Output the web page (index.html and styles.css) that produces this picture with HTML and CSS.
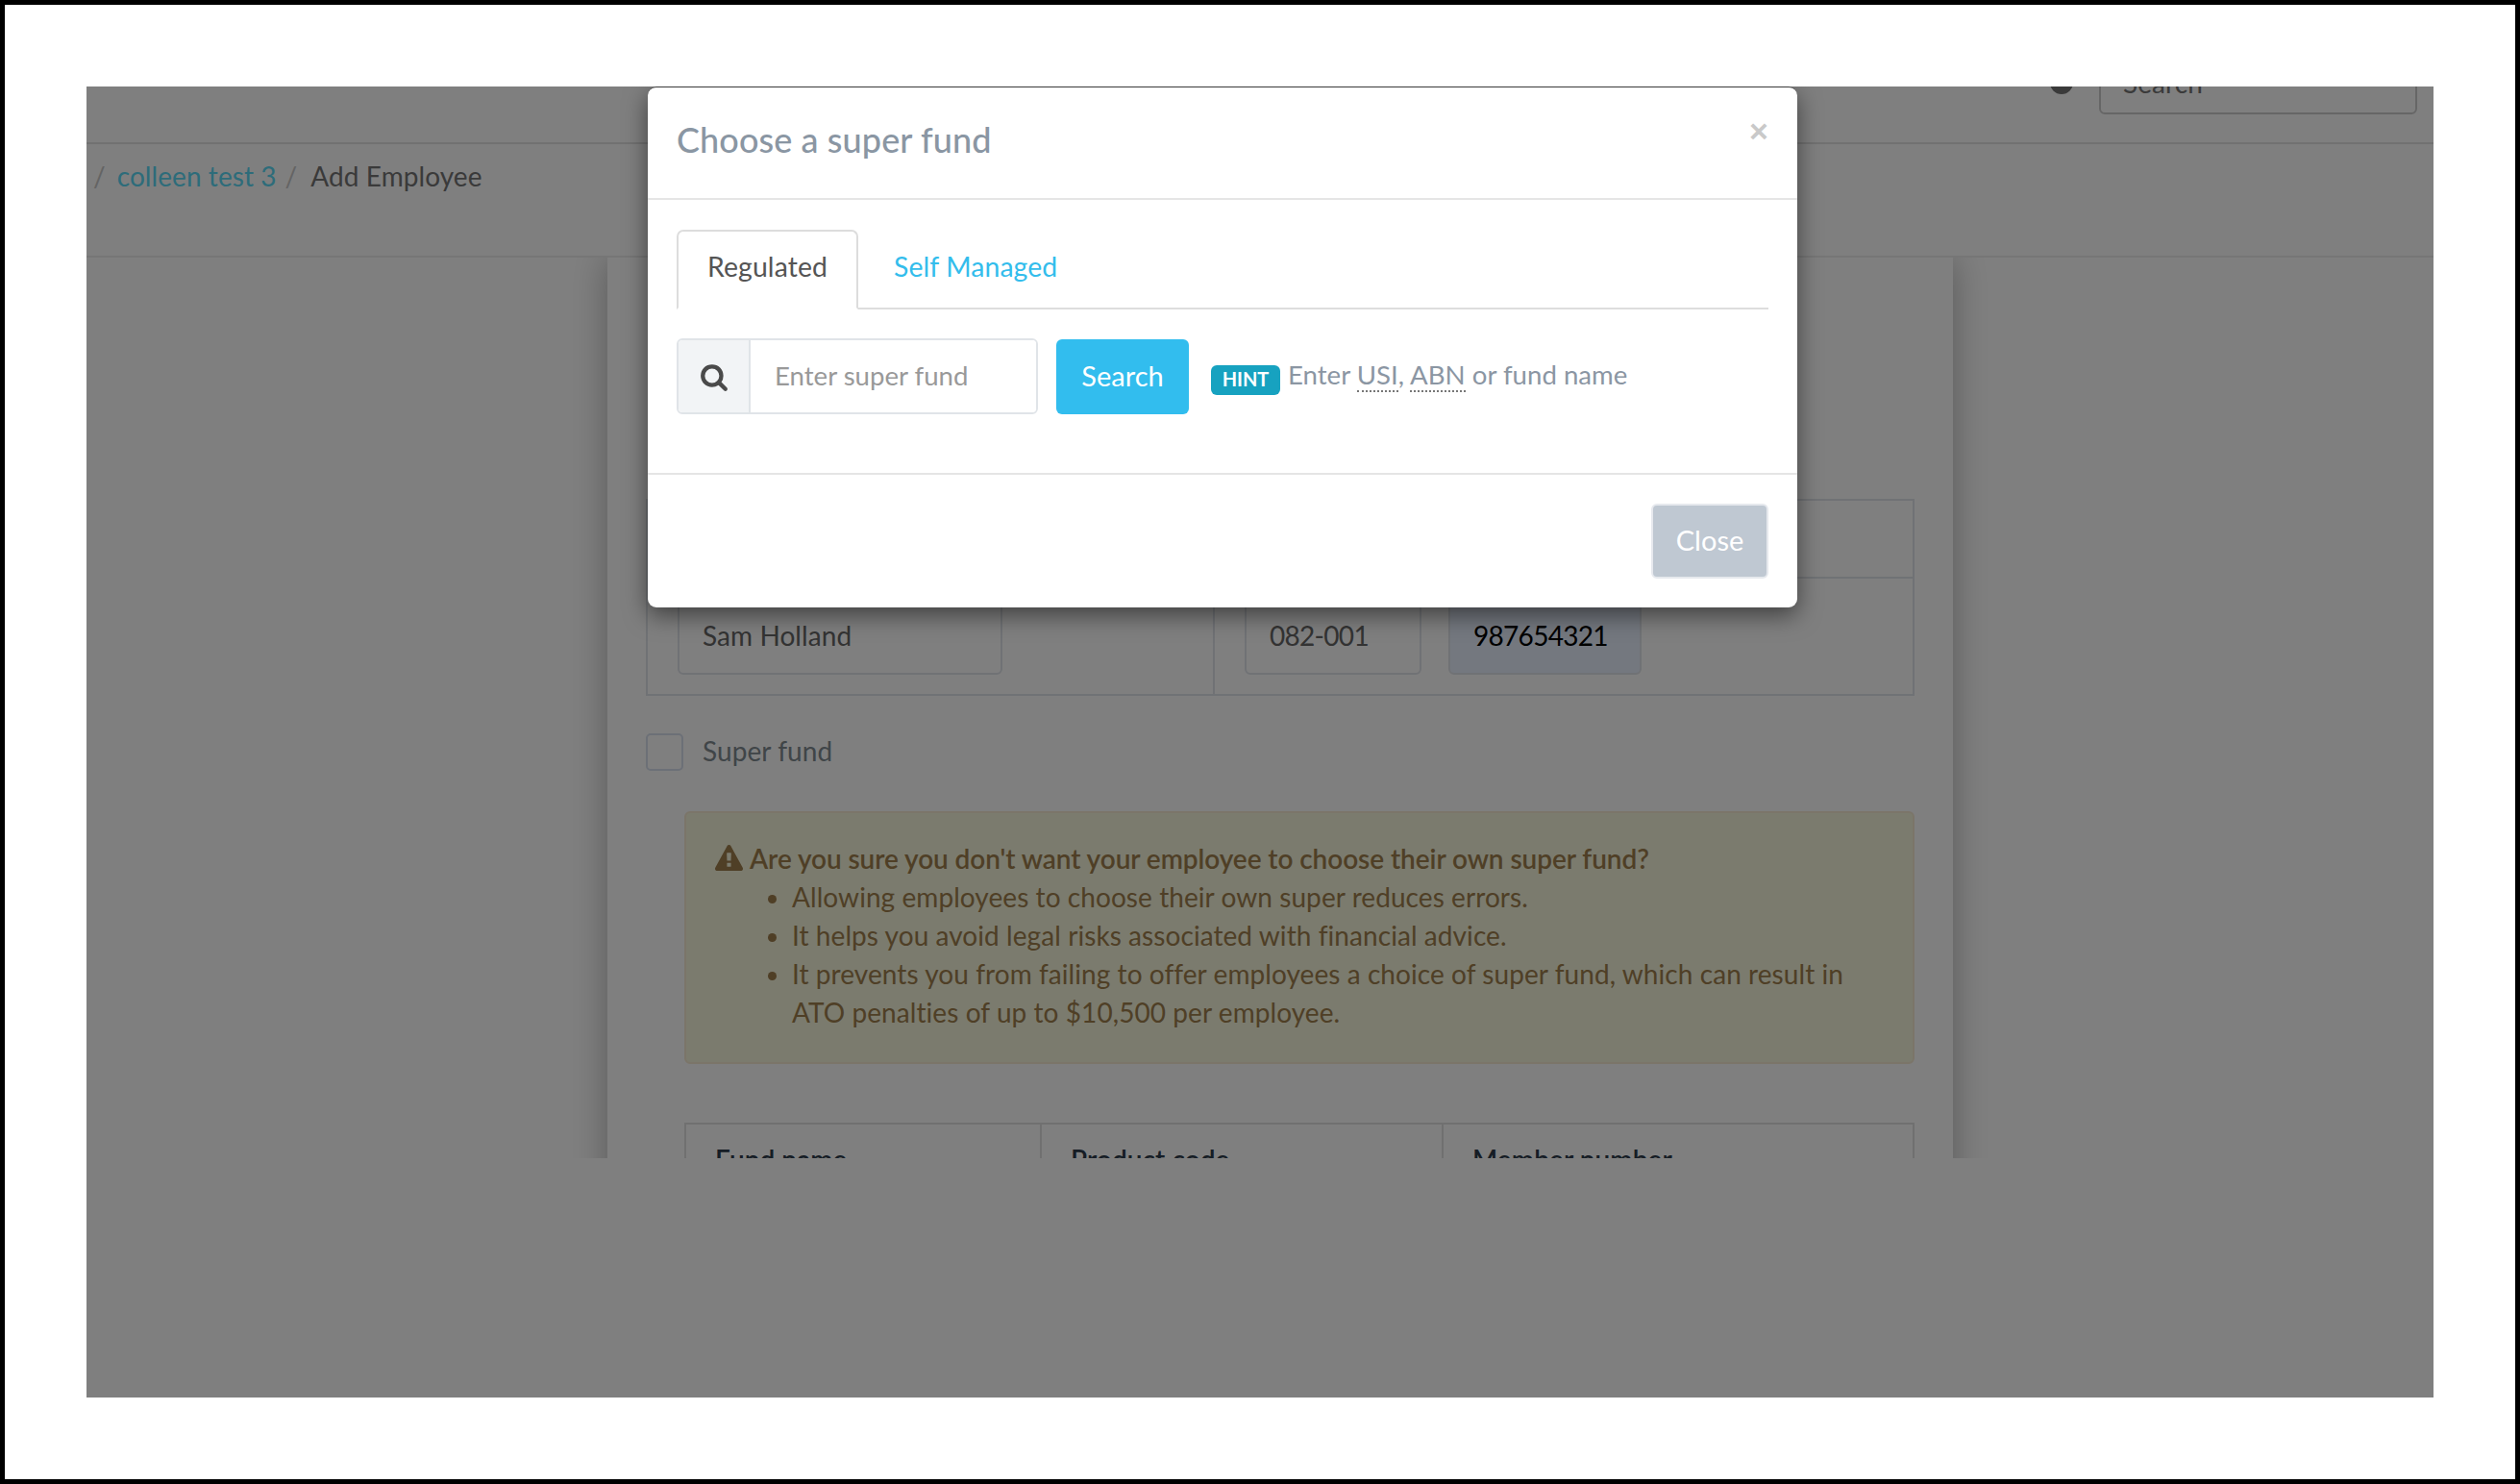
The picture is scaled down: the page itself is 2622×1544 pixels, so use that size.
FILE: index.html
```html
<!DOCTYPE html>
<html lang="en">
<head>
  <meta charset="UTF-8">
  <meta name="viewport" content="width=device-width, initial-scale=1.0">
  <title>Choose a super fund</title>
  <link rel="stylesheet" href="styles.css">
</head>
<body>
  <div class="app-frame">
    <header class="topbar">
      <span class="avatar-dot"></span>
      <div class="topbar-search">Search</div>
    </header>

    <nav class="breadcrumb">
      <span class="crumb-sep first">/</span>
      <a class="crumb-link">colleen test 3</a>
      <span class="crumb-sep">/</span>
      <span class="crumb-current">Add Employee</span>
    </nav>

    <div class="scroll-area">
      <main class="panel">
        <table class="bank-table">
          <tr class="bank-head">
            <td class="bank-name-col"></td>
            <td></td>
          </tr>
          <tr>
            <td>
              <div class="fake-input name-input">Sam Holland</div>
            </td>
            <td>
              <div class="account-inputs">
                <div class="fake-input bsb-input">082-001</div>
                <div class="fake-input account-input">987654321</div>
              </div>
            </td>
          </tr>
        </table>

        <div class="super-check">
          <span class="checkbox"></span>
          <span class="super-label">Super fund</span>
        </div>

        <div class="alert-warning">
          <div class="alert-title">
            <svg class="alert-icon" viewBox="0 0 1792 1792"><path d="M1024 1375v-190q0-14-9.5-23.5t-22.5-9.5h-192q-13 0-22.5 9.5t-9.5 23.5v190q0 14 9.5 23.5t22.5 9.5h192q13 0 22.5-9.5t9.5-23.5zm-2-374l18-459q0-12-10-19-13-11-24-11h-220q-11 0-24 11-10 7-10 21l17 457q0 10 10 16.5t24 6.5h185q14 0 23.5-6.5t10.5-16.5zm-14-934l768 1408q35 63-2 126-17 29-46.5 46t-63.5 17h-1536q-34 0-63.5-17t-46.5-46q-37-63-2-126l768-1408q17-31 47-49t65-18 65 18 47 49z"/></svg>
            <strong>Are you sure you don't want your employee to choose their own super fund?</strong>
          </div>
          <ul class="alert-list">
            <li>Allowing employees to choose their own super reduces errors.</li>
            <li>It helps you avoid legal risks associated with financial advice.</li>
            <li>It prevents you from failing to offer employees a choice of super fund, which can result in ATO penalties of up to $10,500 per employee.</li>
          </ul>
        </div>

        <div class="fund-table">
          <div class="fund-head">Fund name</div>
          <div class="fund-head">Product code</div>
          <div class="fund-head">Member number</div>
        </div>
      </main>
    </div>

    <!-- Modal backdrop and dialog -->
    <div class="modal-backdrop"></div>
    <div class="modal">
      <div class="modal-header">
        <h4 class="modal-title">Choose a super fund</h4>
        <span class="modal-close">&times;</span>
      </div>
      <div class="modal-body">
        <div class="tabs">
          <a class="tab active">Regulated</a>
          <a class="tab">Self Managed</a>
        </div>
        <form class="search-row">
          <div class="input-group">
            <span class="input-addon">
              <svg class="search-icon" viewBox="0 0 1792 1792"><path d="M1216 832q0-185-131.5-316.5t-316.5-131.5-316.5 131.5-131.5 316.5 131.5 316.5 316.5 131.5 316.5-131.5 131.5-316.5zm512 832q0 52-38 90t-90 38q-54 0-90-38l-343-342q-179 124-399 124-143 0-273.5-55.5t-225-150-150-225-55.5-273.5 55.5-273.5 150-225 225-150 273.5-55.5 273.5 55.5 225 150 150 225 55.5 273.5q0 220-124 399l343 343q37 37 37 90z"/></svg>
            </span>
            <input class="fund-input" type="text" placeholder="Enter super fund">
          </div>
          <button class="btn-search" type="button">Search</button>
          <span class="hint-badge">HINT</span>
          <span class="hint-text">Enter <span class="abbr">USI</span>, <span class="abbr">ABN</span> or fund name</span>
        </form>
      </div>
      <div class="modal-footer">
        <button class="btn-close" type="button">Close</button>
      </div>
    </div>
  </div>
</body>
</html>
```

FILE: styles.css
```css
* {
  box-sizing: border-box;
}

html,
body {
  height: 100%;
}

body {
  margin: 0;
  height: 1544px;
  padding: 85px;
  border: 5px solid #000;
  background-color: #fff;
  font-family: Lato, "Liberation Sans", sans-serif;
  font-size: 28px;
  line-height: 40px;
  letter-spacing: 0.07px;
  color: #747474;
}

.app-frame {
  position: relative;
  height: 1364px;
  overflow: hidden;
  background-color: #fff;
}

/* Page behind the modal */
.topbar {
  display: flex;
  align-items: flex-end;
  justify-content: flex-end;
  height: 60px;
  padding: 0 17px 29px 0;
  overflow: hidden;
  border-bottom: 2px solid #e2e2e2;
}

.avatar-dot {
  flex: none;
  width: 24px;
  height: 24px;
  margin: 0 27px 21px 0;
  border-radius: 50%;
  background-color: #747474;
}

.topbar-search {
  flex: none;
  width: 331px;
  height: 60px;
  padding: 5px 23px;
  border: 2px solid #cccccc;
  border-radius: 6px;
}

.breadcrumb {
  display: flex;
  height: 118px;
  padding: 13px 0 0 7px;
  border-bottom: 2px solid #ececec;
}

.crumb-sep {
  margin: 0 14px 0 9px;
  color: #c8c8c8;
}

.crumb-sep.first {
  margin-left: 0;
  margin-right: 12px;
}

.crumb-link {
  color: #5ad8f4;
}

.scroll-area {
  height: 937px;
  overflow: hidden;
}

.panel {
  width: 1400px;
  height: 1100px;
  margin-left: 542px;
  padding: 251px 40px 0;
  background-color: #fff;
  box-shadow: 0 0 36px rgba(0, 0, 0, 0.3);
}

.bank-table {
  width: 1320px;
  border-collapse: collapse;
}

.bank-table td {
  padding: 20px 31px;
  border: 2px solid #e0e4ea;
}

.bank-head td {
  height: 81px;
}

.bank-name-col {
  width: 590px;
}

.fake-input {
  height: 80px;
  padding: 17px 24px;
  border: 2px solid #e0e4ea;
  border-radius: 6px;
  color: #666;
}

.name-input {
  width: 338px;
}

.account-inputs {
  display: flex;
  gap: 28px;
}

.bsb-input {
  width: 184px;
  letter-spacing: -0.7px;
}

.account-input {
  width: 201px;
  background-color: #e8f0fe;
  letter-spacing: -0.7px;
  color: #000;
}

.super-check {
  display: flex;
  align-items: center;
  gap: 20px;
  height: 39px;
  margin-top: 39px;
}

.checkbox {
  width: 39px;
  height: 39px;
  border: 2px solid #d8e0ee;
  border-radius: 5px;
}

.super-label {
  padding-bottom: 3px;
  color: #808a90;
}

.alert-warning {
  height: 263px;
  margin: 42px 0 0 40px;
  padding: 27px 30px 0;
  border: 2px solid #f6ead2;
  border-radius: 6px;
  background-color: #f6f6dc;
  color: #9e7e4c;
}

.alert-title {
  display: flex;
  align-items: center;
  gap: 7px;
}

.alert-title strong {
  font-weight: 600;
  letter-spacing: -0.07px;
}

.alert-icon {
  flex: none;
  width: 29px;
  height: 29px;
  fill: #9e7e4c;
}

.alert-list {
  margin: 0;
  padding-left: 80px;
}

.fund-table {
  display: grid;
  grid-template-columns: 368px 418px 1fr;
  height: 120px;
  margin: 61px 0 0 40px;
  border-top: 2px solid #e0e0e0;
  border-left: 2px solid #e0e0e0;
  border-right: 2px solid #e0e0e0;
}

.fund-head {
  padding: 16px 30px;
  border-left: 2px solid #e0e0e0;
  font-weight: 600;
  color: #2c3a4a;
}

.fund-head:first-child {
  border-left: 0;
}

/* Modal */
.modal-backdrop {
  position: absolute;
  inset: 0;
  background-color: rgba(0, 0, 0, 0.5);
}

.modal {
  position: absolute;
  top: 0;
  left: 584px;
  width: 1196px;
  height: 542px;
  border-top: 1px solid #3a3a3a;
  border-radius: 9px;
  background-color: #fff;
  box-shadow: 0 8px 25px rgba(0, 0, 0, 0.5);
}

.modal-header {
  display: flex;
  justify-content: space-between;
  height: 117px;
  padding: 34px 30px 0 30px;
  border-bottom: 2px solid #e5e5e5;
}

.modal-title {
  margin: 0;
  font-size: 36px;
  font-weight: 500;
  letter-spacing: 0.1px;
  color: #8a96a3;
}

.modal-close {
  font-family: "Liberation Sans", sans-serif;
  font-size: 34px;
  line-height: 20px;
  margin-top: 1px;
  font-weight: 700;
  color: #c9c9c9;
}

.modal-body {
  padding: 31px 30px 61px;
  border-bottom: 2px solid #e5e5e5;
}

.tabs {
  display: flex;
  height: 83px;
  border-bottom: 2px solid #dddddd;
}

.tab {
  height: 83px;
  padding: 18px 31px 0;
  font-size: 28.4px;
  letter-spacing: 0.1px;
  color: #33bdec;
}

.tab.active {
  width: 189px;
  margin-right: 6px;
  padding: 16px 30px 0;
  border: 2px solid #dddddd;
  border-bottom: 2px solid #fff;
  border-radius: 7px 7px 0 0;
  color: #555;
}

.search-row {
  display: flex;
  align-items: center;
  margin-top: 30px;
}

.input-group {
  display: flex;
  flex: none;
  width: 376px;
  height: 79px;
  border: 2px solid #e0e4e8;
  border-radius: 6px;
  overflow: hidden;
}

.input-addon {
  display: flex;
  flex: none;
  align-items: center;
  justify-content: center;
  width: 75px;
  border-right: 2px solid #e0e4e8;
  background-color: #f2f4f6;
}

.search-icon {
  width: 30px;
  height: 30px;
  fill: #4a4a4a;
}

.fund-input {
  width: 100%;
  padding: 0 24px 3px 25px;
  border: 0;
  outline: 0;
  font-family: inherit;
  font-size: 27.6px;
}

.fund-input::placeholder {
  color: #999;
}

.btn-search {
  flex: none;
  width: 138px;
  height: 78px;
  margin-left: 19px;
  padding-bottom: 3px;
  border: 0;
  border-radius: 6px;
  background-color: #32bdee;
  font-family: inherit;
  font-size: 29px;
  color: #fff;
}

.hint-badge {
  flex: none;
  width: 72px;
  height: 31px;
  margin: 8px 0 0 23px;
  border-radius: 6px;
  background-color: #17a2c0;
  font-size: 20px;
  font-weight: 700;
  line-height: 29px;
  letter-spacing: 0;
  text-align: center;
  color: #fff;
}

.hint-text {
  margin-left: 8px;
  padding-bottom: 3px;
  font-size: 27.6px;
  letter-spacing: 0;
  color: #8b96a3;
}

.abbr {
  border-bottom: 2px dotted #777;
}

.modal-footer {
  display: flex;
  justify-content: flex-end;
  padding: 30px 30px 0 0;
}

.btn-close {
  width: 122px;
  height: 78px;
  padding-bottom: 4px;
  border: 2px solid #e6e9ee;
  border-radius: 6px;
  background-color: #bfc8d2;
  font-family: inherit;
  font-size: 29px;
  color: #fff;
}
```
